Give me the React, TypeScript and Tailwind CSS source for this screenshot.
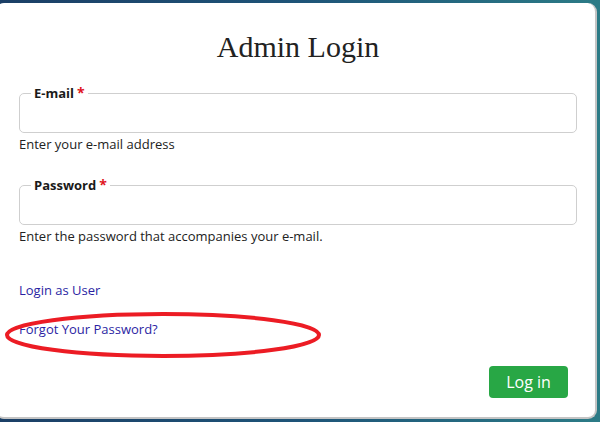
const sans = "font-['Open_Sans','Noto_Sans',sans-serif]";

function Field({ label, help, type }: { label: string; help: string; type: string }) {
  return (
    <div>
      <fieldset className="rounded-[5px] border border-[#cfcfcf] px-[14px]">
        <legend className="ml-[-3px] px-[3px] text-[13px] font-bold leading-[20px] text-[#1a1a1a]">
          {label}
          <span className="ml-[3px] text-[14px] text-[#e0141e]">*</span>
        </legend>
        <input type={type} className="block h-[29px] w-full bg-transparent outline-none" />
      </fieldset>
      <p className="mt-[2px] text-[13px] leading-[18px] text-[#222]">{help}</p>
    </div>
  );
}

export default function App() {
  return (
    <div className={`h-[422px] w-[600px] overflow-hidden bg-gradient-to-r from-[#1b3f66] via-[#1e5478] to-[#2c7b86] pt-[3px] ${sans}`}>
      <div className="relative ml-[-5px] h-[416px] w-[602px] rounded-[9px] border-r-2 border-b-2 border-[#c4c4c4] bg-white pl-[24px] pr-[18px]">
        <h1 className="pt-[27px] text-center font-['Liberation_Serif',serif] text-[30px] leading-[34px] text-[#222]">
          Admin Login
        </h1>

        <div className="mt-[19px]">
          <Field label="E-mail" help="Enter your e-mail address" type="email" />
        </div>
        <div className="mt-[22px]">
          <Field label="Password" help="Enter the password that accompanies your e-mail." type="password" />
        </div>

        <div className="mt-[36px] flex flex-col gap-[21px] text-[13px] leading-[18px] text-[#2b1fa3]">
          <a href="#">Login as User</a>
          <a href="#">Forgot Your Password?</a>
        </div>

        <div className="mt-[28px] flex justify-end pr-[9px]">
          <button className="h-[32px] w-[79px] rounded-[4px] bg-[#28a745] text-[16px] text-white">
            Log in
          </button>
        </div>

        <svg className="pointer-events-none absolute left-[9px] top-[307px]" width="320" height="50" viewBox="0 0 320 50">
          <ellipse cx="159" cy="25" rx="156" ry="21" fill="none" stroke="#ec1c24" strokeWidth="4" />
        </svg>
      </div>
    </div>
  );
}
